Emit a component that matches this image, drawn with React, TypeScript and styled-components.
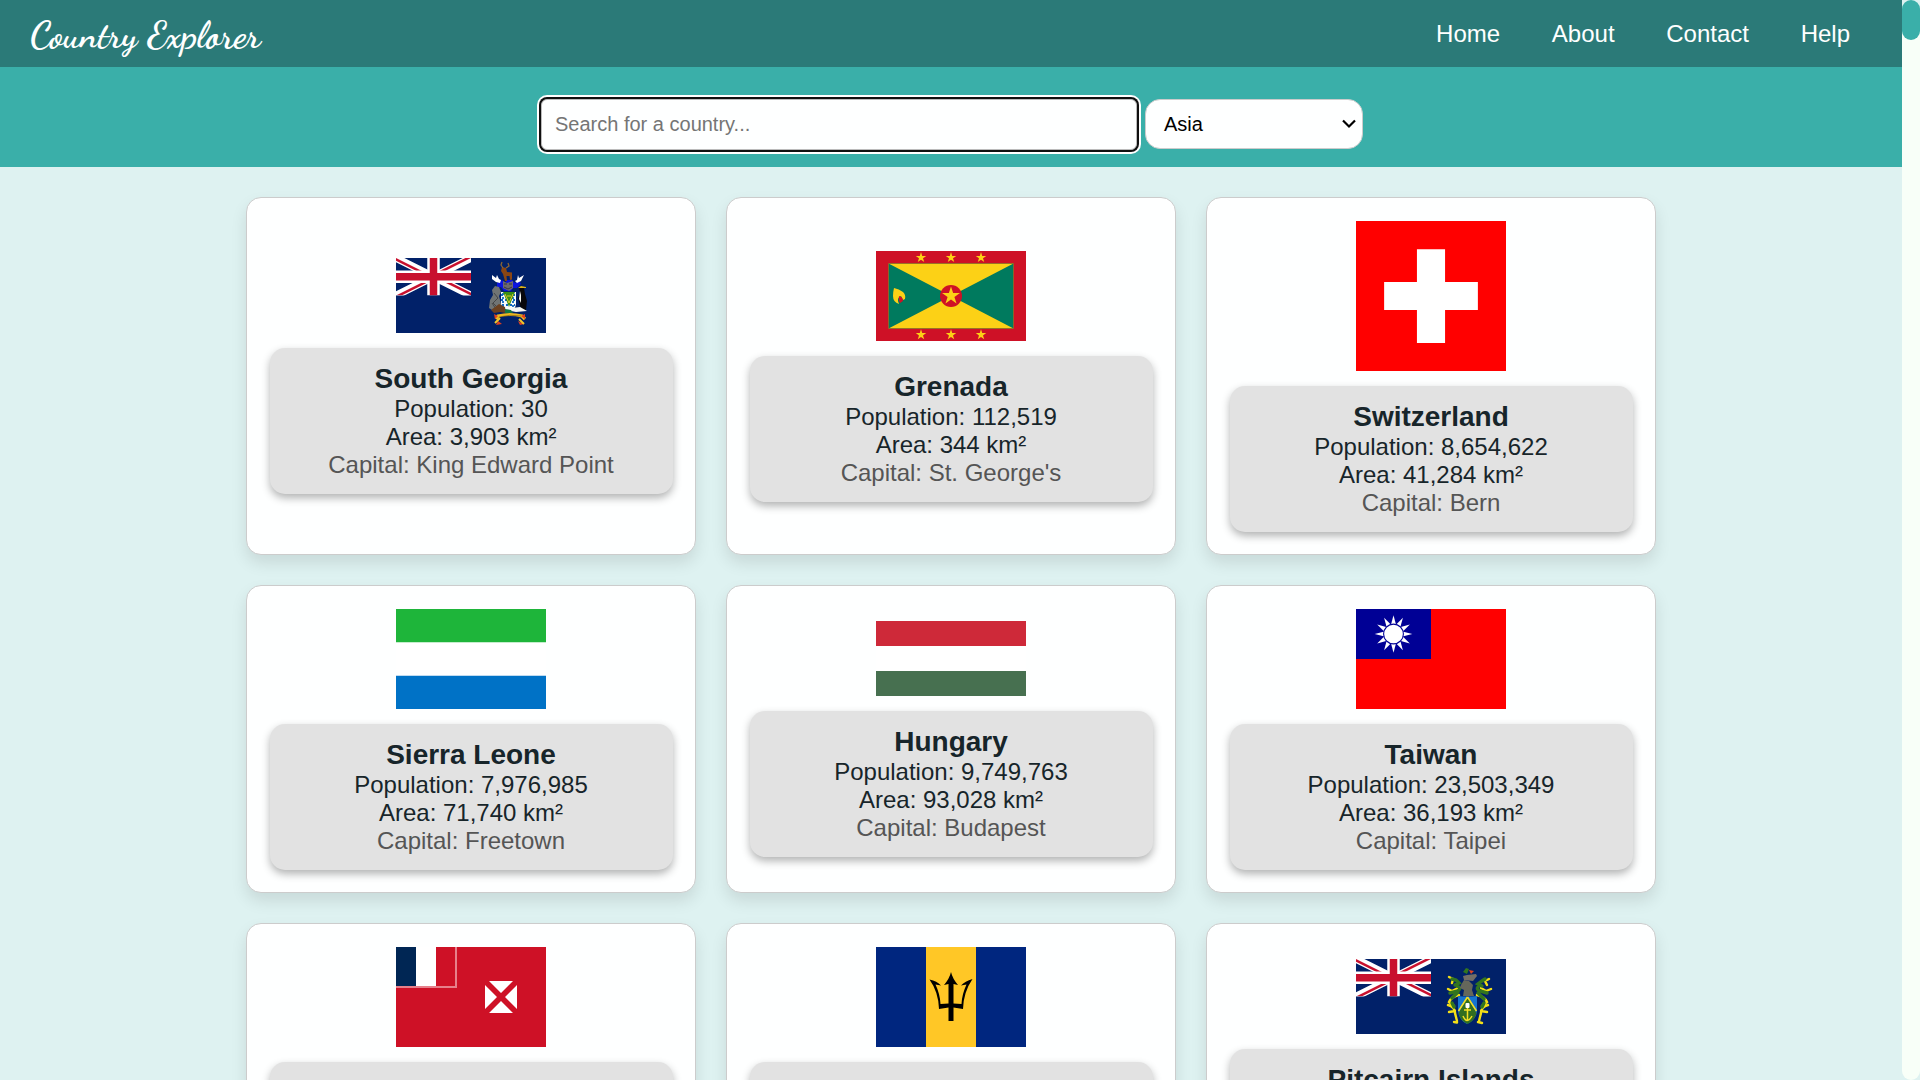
import React from "react";
import styled, { createGlobalStyle } from "styled-components";

const sans = `"Liberation Sans", Arial, Helvetica, sans-serif`;

const GlobalStyle = createGlobalStyle`
  * { box-sizing: border-box; margin: 0; padding: 0; }
  body { background: #def2f1; font-family: ${sans}; color: #17252a; overflow: hidden; }
`;

const Viewport = styled.div`
  display: flex;
  width: 1920px;
  height: 1080px;
  overflow: hidden;
  background: #def2f1;
`;

const Page = styled.div`
  flex: 1;
  height: 1080px;
  overflow: hidden;
`;

const ScrollTrack = styled.div`
  width: 18px;
  height: 1080px;
  border-radius: 10px;
  background: #f8fff8;
`;

const ScrollCap = styled.div`
  height: 40px;
  background: linear-gradient(#def2f1 20px, #f8fff8 20px);
`;

const ScrollThumb = styled.div`
  height: 40px;
  border-radius: 9px;
  background: #3aafa9;
`;

const Header = styled.header`
  display: flex;
  align-items: center;
  justify-content: space-between;
  height: 67px;
  padding: 0 52px 0 30px;
  background: #2b7a78;
`;

const Logo = styled.h1`
  padding-top: 2px;
  font-family: "Dancing Script", "Liberation Serif", cursive;
  font-weight: 700;
  font-size: 37.5px;
  line-height: 40px;
  color: #feffff;
  white-space: nowrap;
`;

const Nav = styled.nav`
  display: flex;
  gap: 51.7px;
`;

const NavLink = styled.a`
  font-size: 24px;
  line-height: 28px;
  color: #feffff;
`;

const SearchBar = styled.section`
  display: flex;
  justify-content: center;
  align-items: flex-start;
  gap: 8px;
  height: 100px;
  padding: 32px 0 0 2px;
  background: #3aafa9;
`;

const SearchInput = styled.input`
  width: 596px;
  height: 51px;
  padding: 0 13px;
  border: 1px solid #bbb;
  border-radius: 6px;
  outline: none;
  box-shadow: 0 0 0 2px #101010, 0 0 0 4px #fff;
  background: #feffff;
  font-family: ${sans};
  font-size: 20px;
  &::placeholder { color: #757575; }
`;

const RegionPicker = styled.div`
  display: flex;
  align-items: center;
  justify-content: space-between;
  width: 218px;
  height: 50px;
  padding: 0 6px 0 18px;
  border: 1px solid #ccc;
  border-radius: 15px;
  background: #feffff;
  font-size: 20px;
  color: #000;
`;

const Grid = styled.main`
  display: grid;
  grid-template-columns: repeat(3, 450px);
  justify-content: center;
  gap: 30px;
  padding-top: 30px;
`;

const Card = styled.article`
  display: flex;
  flex-direction: column;
  align-items: center;
  justify-content: center;
  gap: 15px;
  padding: 22.5px;
  border: 1px solid #ccc;
  border-radius: 15px;
  background: #feffff;
  box-shadow: 0 8px 16px rgba(0, 0, 0, 0.1);
`;

const FlagArt = styled.svg<{ $h: number }>`
  display: block;
  flex: none;
  width: 150px;
  height: ${(p) => p.$h}px;
`;

const Info = styled.div`
  width: 100%;
  height: 146px;
  padding: 15px;
  border-radius: 15px;
  background: #e2e2e2;
  box-shadow: 0 4px 8px rgba(0, 0, 0, 0.3);
  text-align: center;
`;

const Name = styled.h2`
  font-size: 28px;
  line-height: 32px;
  font-weight: 700;
`;

const Fact = styled.p<{ $muted?: boolean }>`
  font-size: 24px;
  line-height: 28px;
  color: ${(p) => (p.$muted ? "#555" : "#17252a")};
`;

const star = (cx: number, cy: number, r: number) =>
  Array.from({ length: 10 }, (_, i) => {
    const rad = i % 2 ? r * 0.382 : r;
    const a = (Math.PI / 5) * i - Math.PI / 2;
    return `${(cx + rad * Math.cos(a)).toFixed(2)},${(cy + rad * Math.sin(a)).toFixed(2)}`;
  }).join(" ");

const UnionJack = ({ id }: { id: string }) => (
  <g transform="scale(1.25)">
    <clipPath id={`${id}-box`}><path d="M0 0h60v30H0z" /></clipPath>
    <clipPath id={`${id}-tri`}><path d="M30 15h30v15zv15H0zH0V0zV0h30z" /></clipPath>
    <g clipPath={`url(#${id}-box)`}>
      <path d="M0 0L60 30M60 0L0 30" stroke="#fff" strokeWidth="6" />
      <path d="M0 0L60 30M60 0L0 30" clipPath={`url(#${id}-tri)`} stroke="#c8102e" strokeWidth="4" />
      <path d="M30 0v30M0 15h60" stroke="#fff" strokeWidth="10" />
      <path d="M30 0v30M0 15h60" stroke="#c8102e" strokeWidth="6" />
    </g>
  </g>
);

const SouthGeorgia = () => (
  <FlagArt $h={75} viewBox="0 0 150 75">
    <path fill="#012169" d="M0 0h150v75H0z" />
    <UnionJack id="sg" />
    <path fill="#0c14e0" d="M101 25l5-3 3 3 2-3h5l3 3 4-3 2 4-4 4h-4l-2 3h-7l-3-4-4 1z" />
    <path fill="#fff" d="M96 17l4 3 1-3 2 4 2 1-1 3-4-1-4-3zM128 17l-5 3-1-3-1 5-2 1 2 2 4-2z" />
    <path fill="#8a4614" d="M106 9l4 1 1 4 5 .5v7l-2 .5-.5-4h-3l.5 5h-2l-2-7-2-3z" />
    <path fill="none" stroke="#8a6434" strokeWidth="1.3" d="M107 10l-2-3 1-3M110 10l3-2-1-3" />
    <path fill="#6d6970" d="M107 23l4 2 6-2v7l-4 3-6-3z" />
    <path fill="none" stroke="#292838" strokeWidth=".8" d="M108 26h3m2 0h3m-8 3l4 2 4-2" />
    <path fill="#f8fafa" d="M105 34h15v12q-1 7-7 8-7-1-8-8z" />
    <path fill="none" stroke="#1268c0" strokeWidth="1.8" strokeDasharray="2 2" d="M107 35v15M117 35v15M105 37h15M105 42h15M106 47h13" />
    <path fill="#398f16" d="M107 34h12l-6 15z" />
    <path fill="none" stroke="#e2c92b" d="M109 36l4 9 4-9M111 38h4" />
    <path fill="#707474" d="M99 28l4 1 2 5-2 4 3 12-7 4-6-4 1-8 3-5-1-5z" />
    <path fill="none" stroke="#333" strokeWidth=".7" d="M98 35l4 5-5 5 5 5M96 45l4 6" />
    <path fill="#6b401f" d="M95 52l8-6 6 3 1 6-6-1-6 1z" />
    <path fill="#08070b" d="M123 29l5 1 1 6 2 7-1 9-5-1-3-11 2-5z" />
    <path fill="#f5f6f2" d="M124 33l1 4v8l-2-4zM116 50l8-1 7 4-11 1-5-1z" />
    <path fill="#ddb318" d="M122 30l3-2 5 1v1z" />
    <path fill="#147644" d="M109 51l6 1 2 3h-8z" />
    <path fill="none" stroke="#eeb91e" strokeWidth="3.2" d="M100 61l2-3q12-3 24 0l3 3" />
    <path fill="none" stroke="#594018" strokeWidth=".5" d="M103 59q11-3 22-1" />
    <path fill="#df4020" d="M98 56l4 2-3 3zM129 56l-4 2 4 3zM102 63l4 3-6 1zM122 63l6 3-4 1z" />
    <path fill="none" stroke="#f3c72a" strokeWidth="2" d="M99 65l5-5M123 61l5 5" />
  </FlagArt>
);

const Grenada = () => (
  <FlagArt $h={90} viewBox="0 0 150 90">
    <path fill="#ce1126" d="M0 0h150v90H0z" />
    <path fill="#007a5e" d="M12.5 12.5h125v65h-125z" />
    <path fill="#fcd116" d="M12.5 12.5h125l-125 65h125z" />
    <path fill="none" stroke="#946c23" strokeWidth=".8" d="M12.5 12.5h125v65h-125z" />
    <circle cx="75" cy="45" r="11" fill="#ce1126" />
    <polygon fill="#fcd116" points={star(75, 45, 9.4)} />
    {[45, 75, 105].map((x) => (
      <React.Fragment key={x}>
        <polygon fill="#fcd116" points={star(x, 6.6, 5.5)} />
        <polygon fill="#fcd116" points={star(x, 83.8, 5.5)} />
      </React.Fragment>
    ))}
    <path fill="#fcd116" d="M18 37q5 1 9 4 3 3 2 7l-2 1-2-4q-5 2-2 8-6-2-6-8 0-4 1-8z" />
    <path fill="#ce1126" d="M23 45q4 1 4 5l-3 2q-2-3-1-7z" />
  </FlagArt>
);

const Switzerland = () => (
  <FlagArt $h={150} viewBox="0 0 32 32">
    <path fill="#f00" d="M0 0h32v32H0z" />
    <path fill="#fff" d="M13 6h6v7h7v6h-7v7h-6v-7H6v-6h7z" />
  </FlagArt>
);

const SierraLeone = () => (
  <FlagArt $h={100} viewBox="0 0 150 100">
    <path fill="#fff" d="M0 0h150v100H0z" />
    <path fill="#1eb53a" d="M0 0h150v33.33H0z" />
    <path fill="#0072c6" d="M0 66.67h150V100H0z" />
  </FlagArt>
);

const Hungary = () => (
  <FlagArt $h={75} viewBox="0 0 150 75">
    <path fill="#fff" d="M0 0h150v75H0z" />
    <path fill="#ce2939" d="M0 0h150v25H0z" />
    <path fill="#477050" d="M0 50h150v25H0z" />
  </FlagArt>
);

const Taiwan = () => (
  <FlagArt $h={100} viewBox="0 0 150 100">
    <path fill="#f00" d="M0 0h150v100H0z" />
    <path fill="#000095" d="M0 0h75v50H0z" />
    {Array.from({ length: 12 }, (_, i) => (
      <path key={i} fill="#fff" d="M37.5 6.2l2.6 9.8h-5.2z" transform={`rotate(${i * 30} 37.5 25)`} />
    ))}
    <circle cx="37.5" cy="25" r="9.9" fill="#fff" stroke="#000095" strokeWidth="1.1" />
  </FlagArt>
);

const WallisFutuna = () => (
  <FlagArt $h={100} viewBox="0 0 150 100">
    <path fill="#ce1126" d="M0 0h150v100H0z" />
    <path fill="#002654" d="M0 0h20v40H0z" />
    <path fill="#fff" d="M20 0h20v40H20z" />
    <path fill="none" stroke="#e7808b" strokeWidth="2" d="M60 0v40H0" />
    <path fill="#fff" d="M93 34h24L105 46zM93 66h24L105 54zM89 38v24L101 50zM121 38v24L109 50z" />
  </FlagArt>
);

const Barbados = () => (
  <FlagArt $h={100} viewBox="0 0 150 100">
    <path fill="#00267f" d="M0 0h150v100H0z" />
    <path fill="#ffc726" d="M50 0h50v100H50z" />
    <path
      fill="#000"
      d="M75 25q1.5 6.5 7 13l-4.5-1v19.500l8 .5q.5-10 5-19.500l-5.500 1q4-4.500 11.500-6.500Q87.500 45 87 62l-9.500-1.500V74h-5V60.500L63 62Q62.500 45 53.500 32.500q7.500 1.500 11.500 6l-5.500-1Q64 47 64.500 57l8-.5V37L68 38q5.500-6.500 7-13z"
    />
  </FlagArt>
);

const Pitcairn = () => (
  <FlagArt $h={75} viewBox="0 0 150 75">
    <path fill="#012169" d="M0 0h150v75H0z" />
    <UnionJack id="pn" />
    <g fill="none" strokeLinecap="round">
      <path stroke="#f4df17" strokeWidth="2.400" d="M93 18l4 2-1 4M133 20l-4 2 2 4M92 30l4 2 6-3M135 30l-5 2-5-3M103 36q-8 2-10 7l5 4M121 36q8 2 10 7l-5 4M92 46q7 2 7 8l2 8M132 46q-7 2-7 8l-2 8M93 53l6-1M125 52l6 1M98 63l3 .5M122 63l4 1" />
      <path stroke="#32751f" strokeWidth="3.400" d="M96 20l4 1 3 3-4 2M129 20l-3 2-4 3 4 2M101 27q5 2 1 5l-8 2M123 27q-4 3 1 5l7 2M102 33l-6 6M122 34l6 6M96 44l2 4M128 44l-2 4" />
    </g>
    <path fill="#65675b" d="M105 26l3-5 5 1 4 4-1 5 2 6h-11l1-6-4-2z" />
    <path fill="#746d66" d="M107 17l4-1 9-1 1 2-4 5-9-1z" />
    <path fill="#32751f" d="M107 13l3-4 3 1-2 5z" />
    <path fill="#df4423" d="M113 11l5 1-3 3z" />
    <path fill="#1674ce" d="M102 37q9 1 19 0v15q-1 9-10 13-8-4-9-13z" />
    <path fill="#326e20" d="M111.500 38l9 16q-2 8-9 11-7-3-9-11z" />
    <path fill="none" stroke="#f6df22" strokeWidth="1.500" d="M111.500 38l-9 14M111.500 38l9 14M111.500 49v13M108 51h7M107 57q4 9 9 0" />
    <rect x="109.500" y="44" width="4" height="5" rx="1" fill="#fff" />
  </FlagArt>
);

const countries = [
  { name: "South Georgia", population: "30", area: "3,903", capital: "King Edward Point", Flag: SouthGeorgia },
  { name: "Grenada", population: "112,519", area: "344", capital: "St. George's", Flag: Grenada },
  { name: "Switzerland", population: "8,654,622", area: "41,284", capital: "Bern", Flag: Switzerland },
  { name: "Sierra Leone", population: "7,976,985", area: "71,740", capital: "Freetown", Flag: SierraLeone },
  { name: "Hungary", population: "9,749,763", area: "93,028", capital: "Budapest", Flag: Hungary },
  { name: "Taiwan", population: "23,503,349", area: "36,193", capital: "Taipei", Flag: Taiwan },
  { name: "", Flag: WallisFutuna },
  { name: "", Flag: Barbados },
  { name: "Pitcairn Islands", Flag: Pitcairn },
];

export default function App() {
  return (
    <Viewport>
      <GlobalStyle />
      <Page>
        <Header>
          <Logo>Country Explorer</Logo>
          <Nav>
            {["Home", "About", "Contact", "Help"].map((label) => (
              <NavLink key={label}>{label}</NavLink>
            ))}
          </Nav>
        </Header>
        <SearchBar>
          <SearchInput placeholder="Search for a country..." />
          <RegionPicker>
            Asia
            <svg width="14" height="10" viewBox="0 0 14 10" fill="none" stroke="#000" strokeWidth="2.200">
              <path d="M1 1.500l6 6 6-6" />
            </svg>
          </RegionPicker>
        </SearchBar>
        <Grid>
          {countries.map(({ name, population, area, capital, Flag }, i) => (
            <Card key={i}>
              <Flag />
              <Info>
                {name && <Name>{name}</Name>}
                {population && <Fact>Population: {population}</Fact>}
                {area && <Fact>Area: {area} km²</Fact>}
                {capital && <Fact $muted>Capital: {capital}</Fact>}
              </Info>
            </Card>
          ))}
        </Grid>
      </Page>
      <ScrollTrack>
        <ScrollCap>
          <ScrollThumb />
        </ScrollCap>
      </ScrollTrack>
    </Viewport>
  );
}
